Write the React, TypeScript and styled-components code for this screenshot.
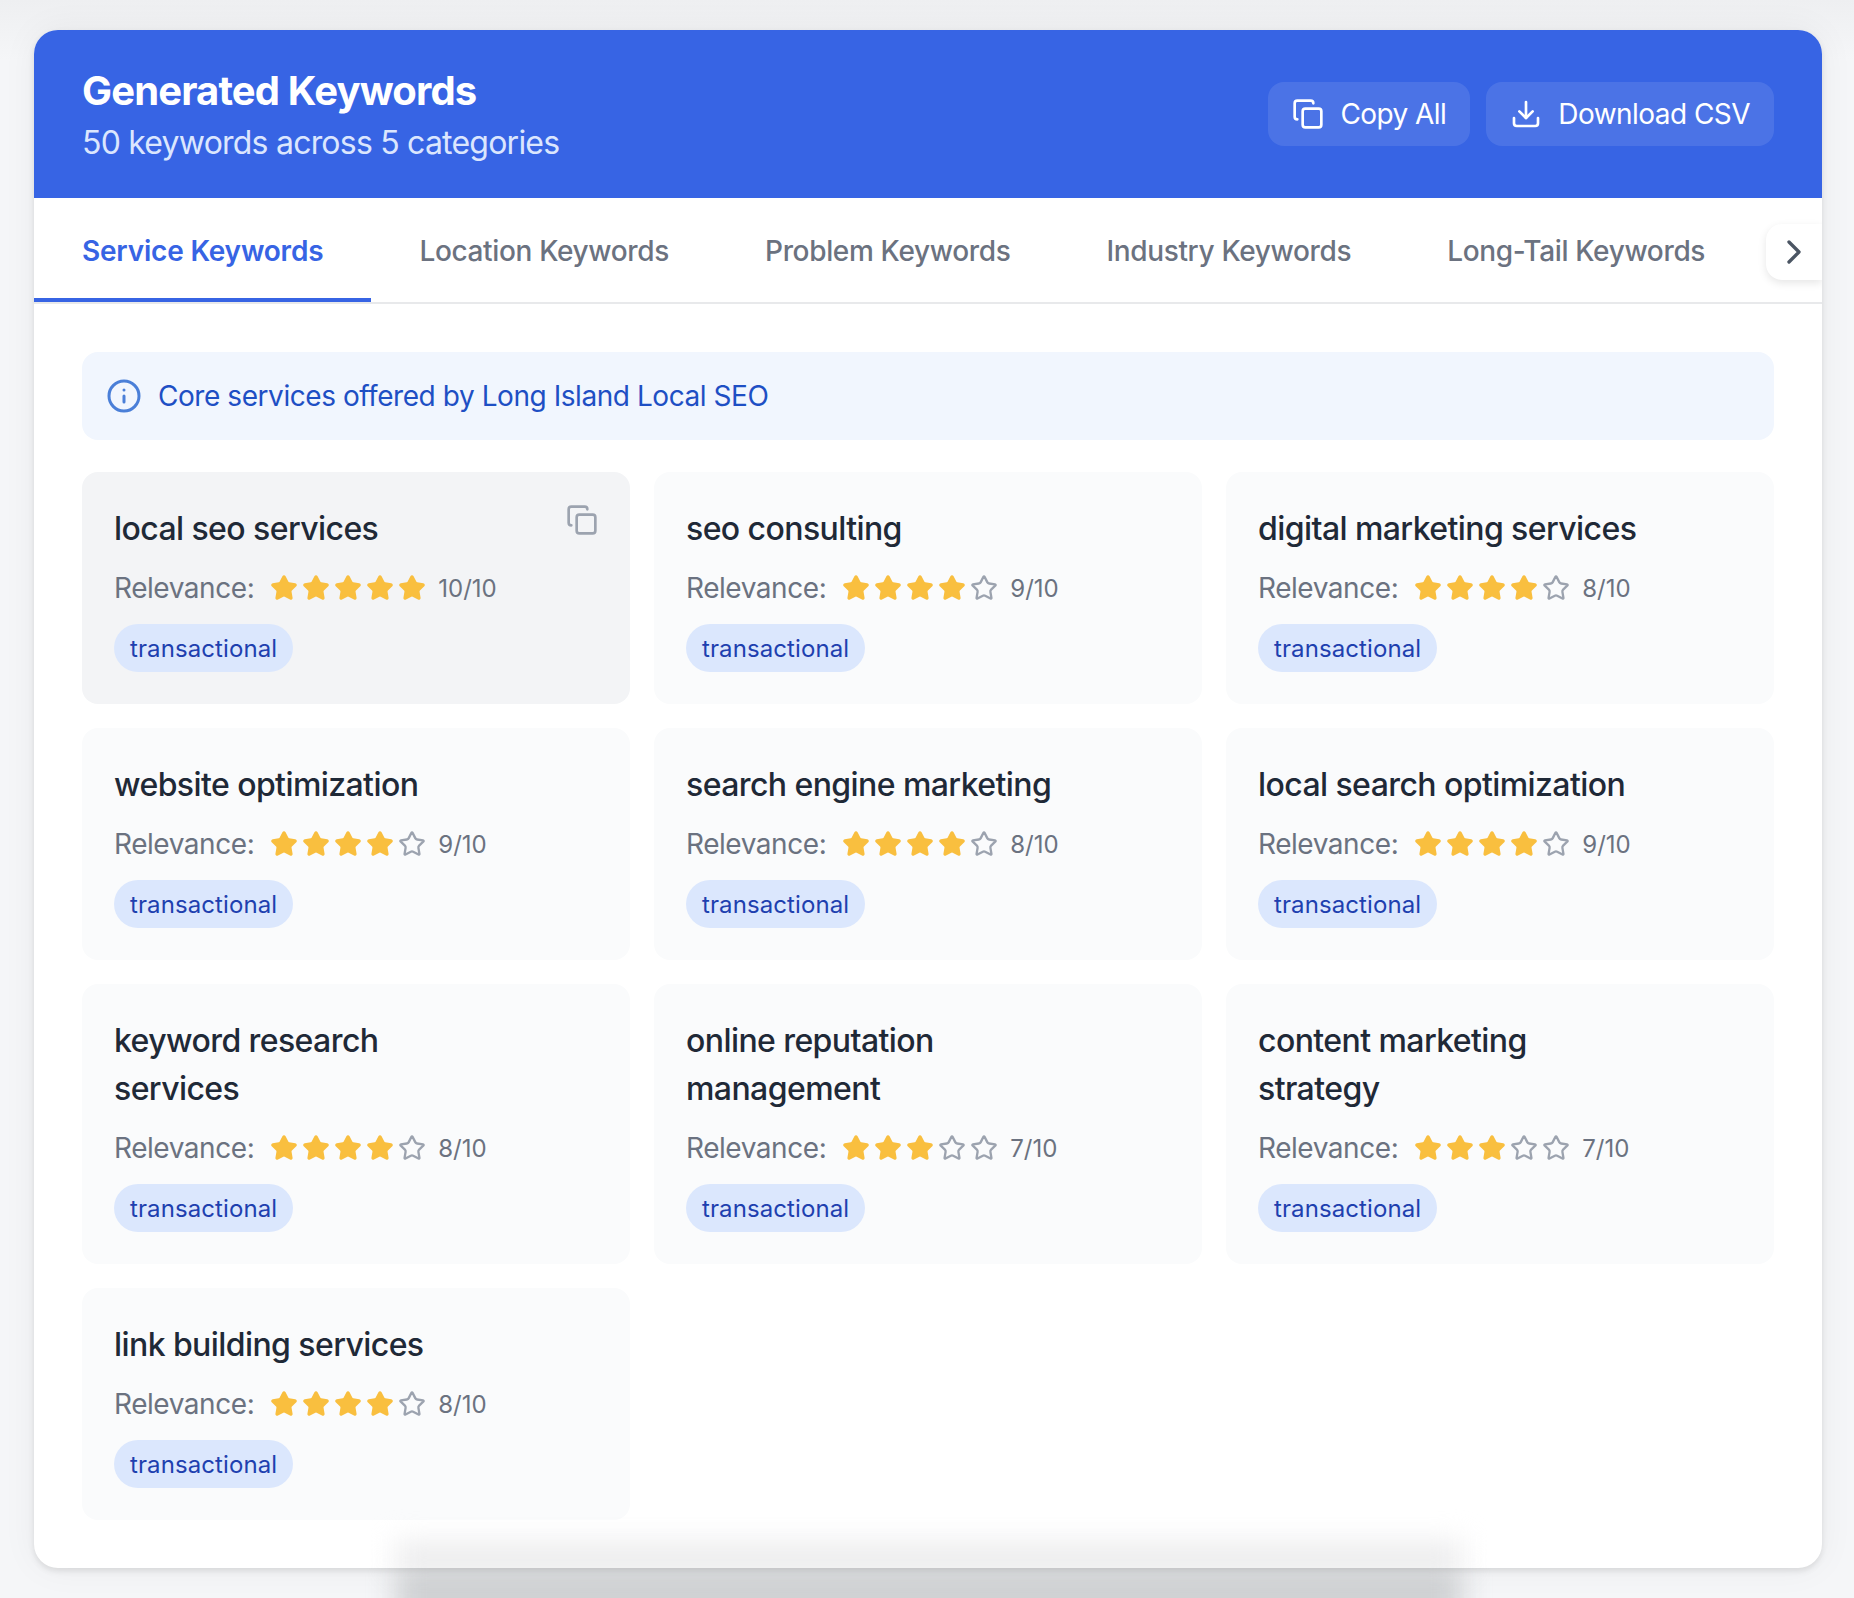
import styled, { createGlobalStyle } from 'styled-components'
import { ChevronRight, Copy, Download, Info, Star } from 'lucide-react'

const GlobalStyle = createGlobalStyle`
  html, body {
    margin: 0;
    height: 1598px;
    overflow: hidden;
    background: #f6f7f8;
    font-family: Inter, "Liberation Sans", sans-serif;
  }
  * {
    box-sizing: border-box;
  }
`

const Page = styled.div`
  position: relative;
  height: 1598px;
  padding: 30px 32px 0 34px;
  overflow: hidden;
  background: linear-gradient(180deg, #eeeff1 0, #f5f6f8 60px);
`

const BottomShade = styled.div`
  position: absolute;
  left: 396px;
  top: 1566px;
  width: 1066px;
  height: 60px;
  background: #cfd1d3;
  filter: blur(14px);
`

const Card = styled.div`
  position: relative;
  width: 1788px;
  height: 1538px;
  background: #fff;
  border-radius: 24px;
  overflow: hidden;
  box-shadow: 0 3px 6px rgba(0, 0, 0, 0.1), 0 0 36px rgba(0, 0, 0, 0.05);
`

const InnerFade = styled.div`
  position: absolute;
  left: 362px;
  bottom: -10px;
  width: 1066px;
  height: 36px;
  background: #ececed;
  filter: blur(14px);
`

const Header = styled.header`
  height: 168px;
  padding: 4px 48px 0;
  display: flex;
  align-items: center;
  justify-content: space-between;
  background: #3764e4;
`

const HeaderText = styled.div`
  display: flex;
  flex-direction: column;
  gap: 10px;
`

const Title = styled.h1`
  margin: 0;
  font-size: 40px;
  line-height: 44px;
  font-weight: 700;
  letter-spacing: -0.85px;
  color: #fff;
`

const Subtitle = styled.p`
  margin: 0;
  font-size: 32px;
  line-height: 40px;
  letter-spacing: -0.78px;
  color: #dbe6fe;
`

const Actions = styled.div`
  display: flex;
  gap: 16px;
  margin-top: -4px;
`

const HeaderButton = styled.button`
  height: 64px;
  padding: 0 24px;
  display: flex;
  align-items: center;
  gap: 16px;
  border: 0;
  border-radius: 16px;
  background: rgba(255, 255, 255, 0.1);
  color: #fff;
  font-family: inherit;
  font-size: 28px;
  font-weight: 400;
  letter-spacing: -0.55px;
`

const Tabs = styled.nav`
  position: relative;
  height: 106px;
  display: flex;
  border-bottom: 2px solid #e8e9eb;
`

const Tab = styled.div<{ $active?: boolean }>`
  height: 104px;
  padding: 6px 48px 0;
  display: flex;
  align-items: center;
  font-size: 28px;
  letter-spacing: ${props => (props.$active ? '-0.2px' : '-0.34px')};
  font-weight: ${props => (props.$active ? 600 : 500)};
  color: ${props => (props.$active ? '#3764e4' : '#6b7280')};
  border-bottom: 4px solid ${props => (props.$active ? '#3764e4' : 'transparent')};
  white-space: nowrap;
`

const ScrollButton = styled.div`
  position: absolute;
  top: 26px;
  right: 0;
  width: 56px;
  height: 56px;
  display: flex;
  align-items: center;
  justify-content: center;
  background: #fff;
  border-radius: 16px 0 0 16px;
  box-shadow: 0 3px 8px rgba(0, 0, 0, 0.1);
  color: #4b5563;
`

const Content = styled.main`
  padding: 48px;
`

const Notice = styled.div`
  height: 88px;
  margin-bottom: 32px;
  padding: 0 24px;
  display: flex;
  align-items: center;
  gap: 16px;
  border-radius: 16px;
  background: #f1f6fe;
  color: #1e4fc4;
  font-size: 28px;
  letter-spacing: -0.44px;
  svg {
    color: #4a7fd8;
  }
`

const Grid = styled.div`
  display: grid;
  grid-template-columns: repeat(3, 1fr);
  gap: 24px;
  align-items: stretch;
`

const KeywordCard = styled.article<{ $hover?: boolean }>`
  position: relative;
  padding: 32px;
  border-radius: 16px;
  background: ${props => (props.$hover ? '#f3f4f6' : '#fafbfc')};
`

const CopyButton = styled.div`
  position: absolute;
  top: 32px;
  right: 32px;
  height: 32px;
  color: #9ca3af;
`

const KeywordName = styled.h3`
  margin: 0 0 15px;
  padding: 1px 96px 0 0;
  font-size: 32px;
  line-height: 48px;
  font-weight: 500;
  letter-spacing: -0.58px;
  color: #1f2937;
`

const RelevanceRow = styled.div`
  height: 40px;
  margin-bottom: 16px;
  display: flex;
  align-items: center;
`

const RelevanceLabel = styled.span`
  margin-right: 16px;
  font-size: 28px;
  letter-spacing: -0.45px;
  color: #6b7280;
`

const Stars = styled.div`
  display: flex;
  gap: 4px;
  margin-right: 12px;
`

const Score = styled.span`
  font-size: 24px;
  color: #6b7280;
`

const Badge = styled.span`
  display: inline-flex;
  align-items: center;
  height: 48px;
  padding: 0 16px;
  border-radius: 24px;
  background: #dbe7fd;
  color: #1e40af;
  font-size: 24px;
  letter-spacing: 0.1px;
`

interface Keyword {
  name: string
  filled: number
  score: number
}

const tabs = ['Service Keywords', 'Location Keywords', 'Problem Keywords', 'Industry Keywords', 'Long-Tail Keywords']

const keywords: Keyword[] = [
  { name: 'local seo services', filled: 5, score: 10 },
  { name: 'seo consulting', filled: 4, score: 9 },
  { name: 'digital marketing services', filled: 4, score: 8 },
  { name: 'website optimization', filled: 4, score: 9 },
  { name: 'search engine marketing', filled: 4, score: 8 },
  { name: 'local search optimization', filled: 4, score: 9 },
  { name: 'keyword research services', filled: 4, score: 8 },
  { name: 'online reputation management', filled: 3, score: 7 },
  { name: 'content marketing strategy', filled: 3, score: 7 },
  { name: 'link building services', filled: 4, score: 8 },
]

const App = () => {
  return (
    <Page>
      <GlobalStyle />
      <BottomShade />
      <Card>
        <Header>
          <HeaderText>
            <Title>Generated Keywords</Title>
            <Subtitle>50 keywords across 5 categories</Subtitle>
          </HeaderText>
          <Actions>
            <HeaderButton>
              <Copy size={32} />
              Copy All
            </HeaderButton>
            <HeaderButton>
              <Download size={32} />
              Download CSV
            </HeaderButton>
          </Actions>
        </Header>
        <Tabs>
          {tabs.map((tab, i) => (
            <Tab key={tab} $active={i === 0}>
              {tab}
            </Tab>
          ))}
          <ScrollButton>
            <ChevronRight size={40} />
          </ScrollButton>
        </Tabs>
        <Content>
          <Notice>
            <Info size={36} />
            Core services offered by Long Island Local SEO
          </Notice>
          <Grid>
            {keywords.map((kw, i) => (
              <KeywordCard key={kw.name} $hover={i === 0}>
                {i === 0 && (
                  <CopyButton>
                    <Copy size={32} />
                  </CopyButton>
                )}
                <KeywordName>{kw.name}</KeywordName>
                <RelevanceRow>
                  <RelevanceLabel>Relevance:</RelevanceLabel>
                  <Stars>
                    {[0, 1, 2, 3, 4].map(n => (
                      <Star
                        key={n}
                        size={28}
                        color={n < kw.filled ? '#f9bf3f' : '#9ca3af'}
                        fill={n < kw.filled ? '#f9bf3f' : 'none'}
                      />
                    ))}
                  </Stars>
                  <Score>{kw.score}/10</Score>
                </RelevanceRow>
                <Badge>transactional</Badge>
              </KeywordCard>
            ))}
          </Grid>
        </Content>
        <InnerFade />
      </Card>
    </Page>
  )
}

export default App
